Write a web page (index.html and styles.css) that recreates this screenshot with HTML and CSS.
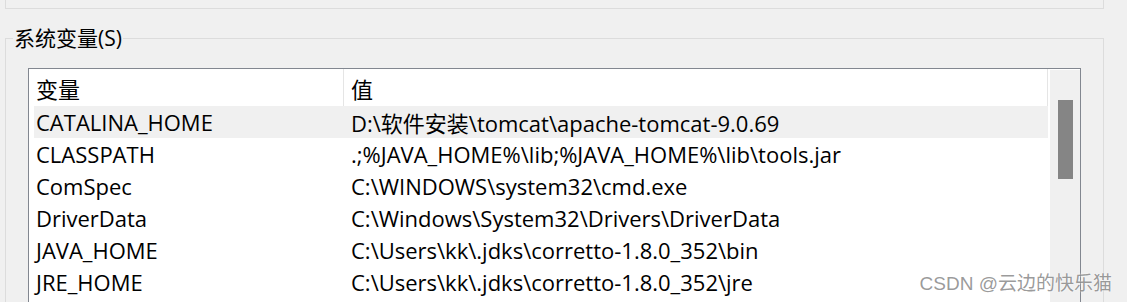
FILE: index.html
```html
<!DOCTYPE html>
<html lang="zh-CN">
<head>
    <meta charset="UTF-8">
    <title>环境变量</title>
    <link rel="stylesheet" href="styles.css">
</head>
<body>
    <div class="user-panel"></div>

    <fieldset class="group">
        <legend>系统变量(S)</legend>
        <div class="listbox">
            <div class="list">
                <div class="head">
                    <div class="head-cell">变量</div>
                    <div class="head-cell">值</div>
                </div>
                <div class="row selected">
                    <div class="name">CATALINA_HOME</div>
                    <div class="value">D:\软件安装\tomcat\apache-tomcat-9.0.69</div>
                </div>
                <div class="row">
                    <div class="name">CLASSPATH</div>
                    <div class="value">.;%JAVA_HOME%\lib;%JAVA_HOME%\lib\tools.jar</div>
                </div>
                <div class="row">
                    <div class="name">ComSpec</div>
                    <div class="value">C:\WINDOWS\system32\cmd.exe</div>
                </div>
                <div class="row">
                    <div class="name">DriverData</div>
                    <div class="value">C:\Windows\System32\Drivers\DriverData</div>
                </div>
                <div class="row">
                    <div class="name">JAVA_HOME</div>
                    <div class="value">C:\Users\kk\.jdks\corretto-1.8.0_352\bin</div>
                </div>
                <div class="row">
                    <div class="name">JRE_HOME</div>
                    <div class="value">C:\Users\kk\.jdks\corretto-1.8.0_352\jre</div>
                </div>
            </div>
            <div class="scrollbar">
                <div class="thumb"></div>
            </div>
        </div>
    </fieldset>

    <div class="watermark">CSDN @云边的快乐猫</div>
</body>
</html>
```

FILE: styles.css
```css
html, body {
    height: 302px;
    overflow: hidden;
}
body {
    margin: 0;
    background-color: #f0f0f0;
    color: #000;
    font-family: "Open Sans", "Noto Sans CJK SC", sans-serif;
    font-size: 22px;
    position: relative;
}
.user-panel {
    height: 8px;
    margin: 0 23px 0 5px;
    border: 1px solid #dcdcdc;
    border-top: none;
}
.group {
    margin: 18px 23px 0 5px;
    padding: 0 0 0 22px;
    border: 1px solid #dcdcdc;
    border-bottom: none;
    min-width: 0;
    height: 300px;
}
.group legend {
    margin-left: -15px;
    padding: 0 1px;
    line-height: 22px;
    font-size: 21px;
}
.listbox {
    display: flex;
    width: 1051px;
    margin-top: 19px;
    border: 1px solid #828790;
    background-color: #fff;
    height: 260px;
}
.list {
    flex: 1;
    padding-right: 1px;
}
.head {
    display: grid;
    grid-template-columns: 315px 1fr;
    height: 37px;
    border-right: 1px solid #e5e5e5;
}
.head-cell {
    padding-left: 7px;
    display: flex;
    align-items: center;
}
.head-cell:first-child {
    border-right: 1px solid #e5e5e5;
}
.row {
    display: grid;
    grid-template-columns: 309px 1fr;
    height: 32px;
    margin-left: 5px;
    align-items: center;
    white-space: nowrap;
}
.row.selected {
    background-color: #f0f0f0;
}
.name {
    padding-left: 2px;
}
.value {
    padding-left: 8px;
}
.scrollbar {
    width: 30px;
    margin-left: 1px;
    margin-top: 1px;
    background-color: #f0f0f0;
    padding-top: 30px;
    box-sizing: border-box;
}
.thumb {
    width: 15px;
    height: 79px;
    margin: 0 auto;
    background-color: #858585;
}
.watermark {
    position: absolute;
    right: 15px;
    bottom: 7px;
    font-family: "Liberation Sans", "Noto Sans CJK SC", sans-serif;
    font-size: 19px;
    color: rgba(110, 110, 110, 0.7);
    text-shadow: 0 0 2px #fff;
}
```
